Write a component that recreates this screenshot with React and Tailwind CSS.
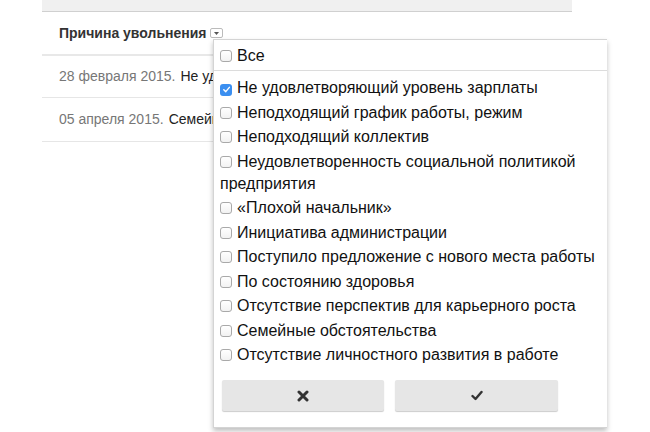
import React from "react";

const reasons = [
  { label: "Не удовлетворяющий уровень зарплаты", checked: true },
  { label: "Неподходящий график работы, режим" },
  { label: "Неподходящий коллектив" },
  { label: "Неудовлетворенность социальной политикой предприятия" },
  { label: "«Плохой начальник»" },
  { label: "Инициатива администрации" },
  { label: "Поступило предложение с нового места работы" },
  { label: "По состоянию здоровья" },
  { label: "Отсутствие перспектив для карьерного роста" },
  { label: "Семейные обстоятельства" },
  { label: "Отсутствие личностного развития в работе" },
];

function Box({ checked }) {
  if (checked) {
    return (
      <span className="mr-[5px] inline-flex h-[12px] w-[12px] items-center justify-center rounded-[3px] bg-[#3b8ff0] align-[-1px]">
        <svg width="9" height="9" viewBox="0 0 10 10">
          <path d="M2 5.2 L4.2 7.4 L8.2 2.6" fill="none" stroke="white" strokeWidth="1.6" strokeLinecap="round" strokeLinejoin="round" />
        </svg>
      </span>
    );
  }
  return (
    <span className="mr-[5px] inline-block h-[12px] w-[12px] rounded-[3px] border border-[#a9a9a9] bg-gradient-to-b from-white to-[#f2f2f2] align-[-1px]" />
  );
}

export default function App() {
  return (
    <div className="relative h-[432px] w-[650px] overflow-hidden bg-white font-['Liberation_Sans',Arial,sans-serif]">
      <div className="ml-[42px] w-[530px]">
        <div className="h-[12px] border-b border-[#d0d0d0] bg-[#f0f0f0]" />
        <div className="flex h-[44px] items-center border-b-2 border-[#e8e8e8] pl-[17px]">
          <span className="text-[14px] font-bold text-[#333]">Причина увольнения</span>
          <span className="ml-[4px] inline-flex h-[10px] w-[13px] items-center justify-center rounded-[2px] border border-[#bbb] bg-white">
            <svg width="5" height="3" viewBox="0 0 5 3">
              <path d="M0 0 H5 L2.5 3 Z" fill="#555" />
            </svg>
          </span>
        </div>
        <div className="flex h-[42px] items-center border-b border-[#e6e6e6] pl-[17px] text-[14px]">
          <div className="w-[154px] overflow-hidden whitespace-nowrap">
            <span className="text-[#777]">28 февраля 2015.</span>
            <span className="ml-[5px] text-[#222]">Не удовлетворяющий</span>
          </div>
        </div>
        <div className="flex h-[44px] items-center border-b border-[#e6e6e6] pl-[17px] text-[14px]">
          <div className="w-[154px] overflow-hidden whitespace-nowrap">
            <span className="text-[#777]">05 апреля 2015.</span>
            <span className="ml-[5px] text-[#222]">Семейные обстоятельства</span>
          </div>
        </div>
      </div>

      <div className="absolute left-[213px] top-[39px] h-[389px] w-[394px] border-b border-l border-t border-[#d4d4d4] bg-white shadow-[0_3px_5px_rgba(0,0,0,0.25)]">
        <div className="pb-[3px] pl-[6px] pt-[5px] text-[16px] leading-[22px] text-[#111]">
          <Box />
          Все
        </div>
        <div className="border-t border-[#dcdcdc]" />
        <div className="flex flex-col gap-[2.5px] pl-[6px] pt-[6px] text-[16px] leading-[22px] text-[#111]">
          {reasons.map((r) => (
            <div key={r.label}>
              <Box checked={r.checked} />
              {r.label}
            </div>
          ))}
        </div>
        <div className="mt-[14px] flex gap-[11px] pl-[8px]">
          <button className="flex h-[31px] w-[162px] items-center justify-center rounded-[2px] bg-[#e6e6e6] shadow-[0_1px_1px_rgba(0,0,0,0.2)]">
            <svg width="12" height="12" viewBox="0 0 12 12">
              <path d="M2 2 L10 10 M10 2 L2 10" stroke="#333" strokeWidth="3" strokeLinecap="round" />
            </svg>
          </button>
          <button className="flex h-[31px] w-[163px] items-center justify-center rounded-[2px] bg-[#e6e6e6] shadow-[0_1px_1px_rgba(0,0,0,0.2)]">
            <svg width="12" height="11" viewBox="0 0 12 11">
              <path d="M1.5 6 L4.5 9 L10.5 2" fill="none" stroke="#333" strokeWidth="2.4" strokeLinecap="round" strokeLinejoin="round" />
            </svg>
          </button>
        </div>
      </div>
    </div>
  );
}
